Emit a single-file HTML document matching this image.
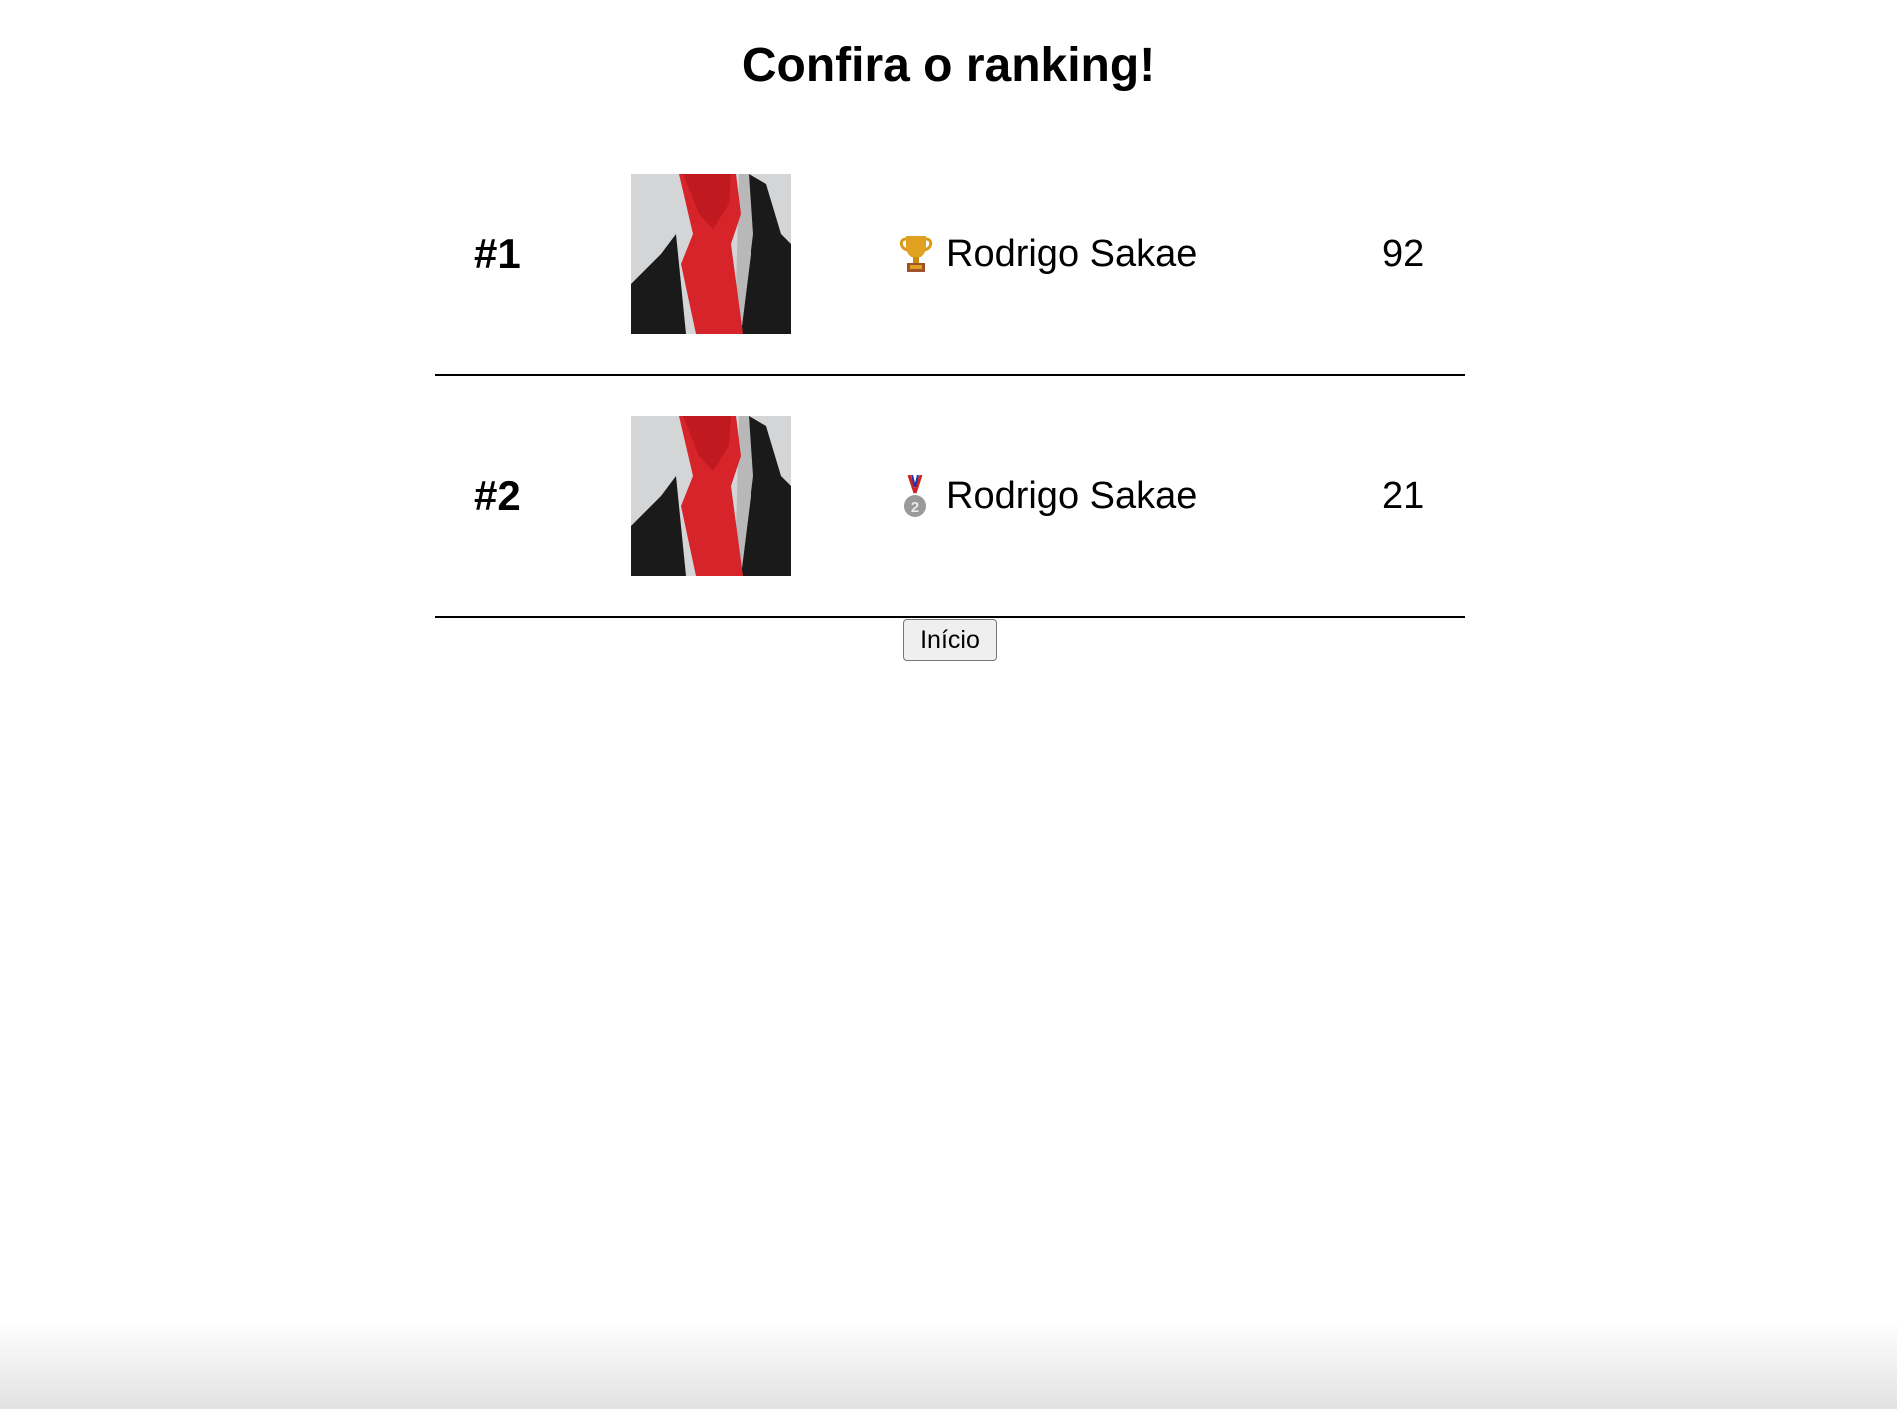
<!DOCTYPE html>
<html><head><meta charset="utf-8"><style>
html,body{margin:0;padding:0;background:#fff;width:1897px;height:1409px;overflow:hidden;position:relative;font-family:"Liberation Sans",Arial,sans-serif;color:#000}
.a{position:absolute}
h1{position:absolute;left:0;width:1897px;top:38px;margin:0;text-align:center;font-size:48px;font-weight:bold}
.rank{font-size:42px;font-weight:bold}
.name{font-size:38px}
.hr{height:2px;background:#000;left:435px;width:1030px}
.btn{left:903px;top:619px;width:92px;height:40px;border:1px solid #767676;border-radius:4px;background:#efefef;font-size:25px;text-align:center;line-height:40px}
.shadow{left:0;top:1320px;width:1897px;height:89px;background:linear-gradient(#fff,#e2e2e2)}
</style></head><body>
<h1>Confira o ranking!</h1>

<svg width="0" height="0" style="position:absolute"><defs>
<g id="tie">
<rect width="160" height="160" fill="#d4d5d7"/>
<polygon points="0,110 30,80 45,60 55,160 0,160" fill="#1a1a1a"/>
<polygon points="118,0 135,10 150,60 160,70 160,160 110,160 120,80" fill="#1a1a1a"/>
<polygon points="108,0 118,0 122,60 110,160 104,160" fill="#b8b8b8"/>
<polygon points="48,0 105,0 110,40 100,70 112,160 65,160 50,90 62,60" fill="#d6242a"/>
<polygon points="52,0 100,0 98,30 82,55 68,40" fill="#c01a20"/>
</g></defs></svg>

<div class="a rank" style="left:474px;top:230px">#1</div>
<svg class="a" style="left:631px;top:174px" width="160" height="160"><use href="#tie"/></svg>
<svg class="a" style="left:898px;top:233px" width="36" height="40" viewBox="0 0 36 40">
<path d="M8 3h20v10c0 7-4 12-10 12S8 20 8 13z" fill="#e0a020"/>
<path d="M8 6C2 6 1 14 9 17M28 6c6 0 7 8-1 11" stroke="#d99a1a" stroke-width="3" fill="none"/>
<rect x="15" y="24" width="6" height="7" fill="#c98a10"/>
<rect x="9" y="30" width="18" height="9" fill="#a0522d"/><rect x="12" y="32" width="12" height="4" fill="#e0a020"/>
</svg>
<div class="a name" style="left:946px;top:233px">Rodrigo Sakae</div>
<div class="a name" style="left:1382px;top:233px">92</div>
<div class="a hr" style="top:374px"></div>

<div class="a rank" style="left:474px;top:472px">#2</div>
<svg class="a" style="left:631px;top:416px" width="160" height="160"><use href="#tie"/></svg>
<svg class="a" style="left:900px;top:475px" width="30" height="44" viewBox="0 0 30 44">
<path d="M9 0l6 18M21 0l-6 18" stroke="#c22" stroke-width="3"/><path d="M12 0l3 12M18 0l-3 12" stroke="#23a" stroke-width="2"/>
<circle cx="15" cy="31" r="11" fill="#9a9a9a"/><text x="15" y="37" font-size="15" font-weight="bold" text-anchor="middle" fill="#e8e8e8" font-family="Liberation Sans">2</text>
</svg>
<div class="a name" style="left:946px;top:475px">Rodrigo Sakae</div>
<div class="a name" style="left:1382px;top:475px">21</div>
<div class="a hr" style="top:616px"></div>

<div class="a btn">Início</div>
<div class="a shadow"></div>
</body></html>
